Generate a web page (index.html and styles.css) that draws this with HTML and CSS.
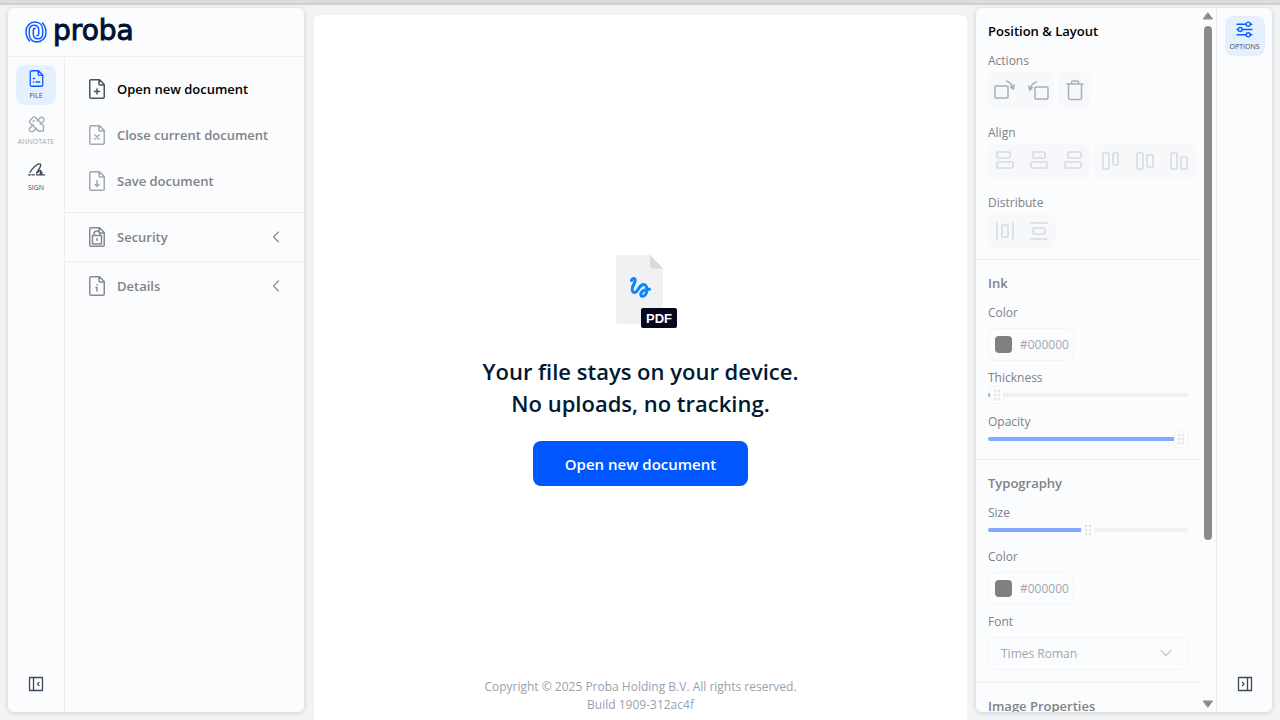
FILE: index.html
```html
<!DOCTYPE html>
<html lang="en">
<head>
<meta charset="utf-8">
<meta name="viewport" content="width=device-width, initial-scale=1">
<title>Proba</title>
<link rel="stylesheet" href="styles.css">
</head>
<body>
<svg class="defs" aria-hidden="true">
  <symbol id="doc" viewBox="0 0 16 20"><path d="M2 .75h8.500l4.750 4.750V18a1.250 1.250 0 0 1-1.250 1.250H2A1.250 1.250 0 0 1 .75 18V2A1.250 1.250 0 0 1 2 .75zM10 1v4a1 1 0 0 0 1 1h4"/></symbol>
  <symbol id="chev-left" viewBox="0 0 8 12"><path d="M6.500 1 1.500 6l5 5"/></symbol>
</svg>
<div class="topbar"></div>
<div class="app">
  <aside class="panel panel-left">
    <header class="brand">
      <svg class="brand-mark" viewBox="0 0 22 22" aria-hidden="true">
        <path id="whorl" d="M4.500 20C2 17 1 14 1 10.500 1 5 5 1 10 1c5 0 7.700 3.500 7.700 8v3.500c0 3.500-2 5.300-4.700 5.300-3 0-4.700-2-4.700-4.800V9.500c0-1.300.8-2.300 1.800-2.300"/>
        <use href="#whorl" transform="rotate(180 11 11)"/>
      </svg>
      <span class="brand-name">proba</span>
    </header>
    <div class="panel-body">
      <nav class="rail">
        <button class="rail-item active">
          <svg class="i16" viewBox="0 0 14 17"><path d="M2 .75h7l4.250 4.250v10a1.250 1.250 0 0 1-1.250 1.250H2A1.250 1.250 0 0 1 .75 15V2A1.250 1.250 0 0 1 2 .75zM8.700 1v3.300a1 1 0 0 0 1 1H13M3.800 8.500h1.200M3.800 12H4.200M6.500 12h3.700"/></svg>
          <span>FILE</span>
        </button>
        <button class="rail-item" disabled>
          <svg class="i16" viewBox="0 0 16 17"><path d="M1.300 4.700 4.700 1.300a1.500 1.500 0 0 1 2 0L15 9.800V15H9.900L1.300 6.700a1.500 1.500 0 0 1 0-2zM5.700 4.500 4.500 5.700M8.500 5l2.700-3a2.500 2.500 0 0 1 3.600 0 2.500 2.500 0 0 1 0 3.600L11.700 8.300M4.700 8.800 1.400 12a2.500 2.500 0 0 0 0 3 2.500 2.500 0 0 0 3.400.2L8 12.200"/></svg>
          <span>ANNOTATE</span>
        </button>
        <button class="rail-item">
          <svg class="i16" viewBox="0 0 16 17"><path d="M1.500 10.500C4 5.500 9 1.500 11.500 2c2.200.6-1.500 5.800-3.500 9.200 2-2 4.200-3.500 4.400-2.200.1.900-1.200 2.600-.4 3.200.7.400 1.500-.5 1.500-2M0 12.800h2M3.500 12.800h2.300M8 12.800h8"/></svg>
          <span>SIGN</span>
        </button>
        <button class="collapse" aria-label="Collapse left panel">
          <svg viewBox="0 0 16 16"><path d="M1.500 1.500h13v13h-13zM5.500 1.500v13M11 6.500 9.500 8l1.500 1.500"/></svg>
        </button>
      </nav>
      <div class="menu">
        <div class="menu-group">
          <button class="menu-item">
            <svg class="file-icon"><use href="#doc"/><path d="M8 10v5M5.500 12.500h5"/></svg>
            <span>Open new document</span>
          </button>
          <button class="menu-item" disabled>
            <svg class="file-icon"><use href="#doc"/><path d="m6 10 4 4M10 10l-4 4"/></svg>
            <span>Close current document</span>
          </button>
          <button class="menu-item" disabled>
            <svg class="file-icon"><use href="#doc"/><path d="M8 9.500v6M6 13.500l2 2 2-2"/></svg>
            <span>Save document</span>
          </button>
        </div>
        <button class="menu-item section" disabled>
          <svg class="file-icon"><use href="#doc"/><path d="M3.500 8.500h9v8.500h-9zM5 8.300V7a3 3 0 0 1 6 0v1.300M8 11.500v2"/></svg>
          <span>Security</span>
          <svg class="chev"><use href="#chev-left"/></svg>
        </button>
        <button class="menu-item section" disabled>
          <svg class="file-icon"><use href="#doc"/><path d="M7 11.500h1v3.500M8 8.800v.2"/></svg>
          <span>Details</span>
          <svg class="chev"><use href="#chev-left"/></svg>
        </button>
      </div>
    </div>
  </aside>

  <main class="stage">
    <section class="hero">
      <svg class="hero-icon" viewBox="0 0 61 73" role="img" aria-label="PDF">
        <path fill="#f0f1f3" d="M3 0h31l13 13v53a3 3 0 0 1-3 3H3a3 3 0 0 1-3-3V3a3 3 0 0 1 3-3z"/>
        <path fill="#d9d9d9" d="M34 0l13 13.500H37a3 3 0 0 1-3-3z"/>
        <path class="squiggle" d="M15.500 25.500C16 23.800 18 23 19 24.300c1.200 1.700-1.500 5-2.500 8-1 3.300.3 5.500 2.300 5.200 3.800-.5 4-8.200 9-8 2.700.2 3.400 3.500 3 6.500-.4 2.900-2.200 5.500-4.500 5.300-1.800-.2-2-2.300-1-3.800 1.500-2.300 5.500-3.500 8.200-3.200"/>
        <rect x="25" y="53" width="36" height="20" rx="2" fill="#05081d"/>
        <text x="43" y="68" class="pdf-tag">PDF</text>
      </svg>
      <h1>Your file stays on your device.<br>No uploads, no tracking.</h1>
      <button class="primary">Open new document</button>
    </section>
    <footer>Copyright © 2025 Proba Holding B.V. All rights reserved.<br>Build 1909-312ac4f</footer>
  </main>

  <aside class="panel panel-right">
    <div class="props">
      <section>
        <h2>Position &amp; Layout</h2>
        <span class="label first">Actions</span>
        <div class="tools actions">
          <div class="tool-group">
            <button disabled aria-label="Rotate right"><svg viewBox="0 0 22 20"><path d="M2 6h11a1 1 0 0 1 1 1v10a1 1 0 0 1-1 1H2a1 1 0 0 1-1-1V7a1 1 0 0 1 1-1zM12.500 1c3.500 1 5.800 3.500 6.500 8M16.500 6.500 19.300 9.300 20.200 5"/></svg></button>
            <button disabled aria-label="Rotate left"><svg viewBox="0 0 22 20"><path d="M9 7h11a1 1 0 0 1 1 1v10a1 1 0 0 1-1 1H9a1 1 0 0 1-1-1V8a1 1 0 0 1 1-1zM9.500 2C6 3 3.700 5.500 3 10M1.800 6 2.700 10.300 5.500 7.500"/></svg></button>
          </div>
          <div class="tool-group">
            <button disabled aria-label="Delete"><svg viewBox="0 0 22 22"><path d="M3 5h16M7.500 5V3.500A1.500 1.500 0 0 1 9 2h4a1.500 1.500 0 0 1 1.500 1.500V5M4.500 5v13.500A2 2 0 0 0 6.500 20.500h9a2 2 0 0 0 2-2V5"/></svg></button>
          </div>
        </div>
        <span class="label group">Align</span>
        <div class="tools faint">
          <div class="tool-group">
            <button disabled aria-label="Align left"><svg viewBox="0 0 20 20"><rect x="2" y="1" width="13" height="6" rx="1"/><rect x="2" y="11" width="16" height="6" rx="1"/></svg></button>
            <button disabled aria-label="Align center"><svg viewBox="0 0 20 20"><rect x="4" y="1" width="12" height="6" rx="1"/><rect x="2" y="11" width="16" height="6" rx="1"/></svg></button>
            <button disabled aria-label="Align right"><svg viewBox="0 0 20 20"><rect x="5" y="1" width="13" height="6" rx="1"/><rect x="2" y="11" width="16" height="6" rx="1"/></svg></button>
          </div>
          <div class="tool-group">
            <button disabled aria-label="Align top"><svg viewBox="0 0 20 20"><rect x="2" y="2" width="6" height="16" rx="1"/><rect x="12" y="2" width="5" height="12" rx="1"/></svg></button>
            <button disabled aria-label="Align middle"><svg viewBox="0 0 20 20"><rect x="2" y="2" width="6" height="16" rx="1"/><rect x="12" y="4" width="6" height="12" rx="1"/></svg></button>
            <button disabled aria-label="Align bottom"><svg viewBox="0 0 20 20"><rect x="2" y="2" width="6" height="16" rx="1"/><rect x="12" y="6" width="6" height="12" rx="1"/></svg></button>
          </div>
        </div>
        <span class="label group">Distribute</span>
        <div class="tools faint">
          <div class="tool-group">
            <button disabled aria-label="Distribute horizontally"><svg viewBox="0 0 20 20"><path d="M2 2v16M18 2v16"/><rect x="7" y="4" width="6" height="12" rx="1"/></svg></button>
            <button disabled aria-label="Distribute vertically"><svg viewBox="0 0 20 20"><path d="M2 2h16M2 18h16"/><rect x="4" y="7" width="12" height="6" rx="1"/></svg></button>
          </div>
        </div>
      </section>

      <section class="muted">
        <h2>Ink</h2>
        <label class="label first" for="ink-color">Color</label>
        <div class="color-field"><span class="swatch"></span><input id="ink-color" type="text" value="#000000" disabled></div>
        <label class="label after-field" for="thickness">Thickness</label>
        <input id="thickness" type="range" value="1" disabled style="--fill: 1%">
        <label class="label" for="opacity">Opacity</label>
        <input id="opacity" type="range" value="100" disabled style="--fill: 100%">
      </section>

      <section class="muted">
        <h2>Typography</h2>
        <label class="label first" for="size">Size</label>
        <input id="size" type="range" value="50" disabled style="--fill: 50%">
        <label class="label" for="type-color">Color</label>
        <div class="color-field"><span class="swatch"></span><input id="type-color" type="text" value="#000000" disabled></div>
        <label class="label after-field" for="font">Font</label>
        <div class="select-field">
          <select id="font" disabled><option>Times Roman</option></select>
          <svg viewBox="0 0 12 8" aria-hidden="true"><path d="m1 1.500 5 5 5-5"/></svg>
        </div>
      </section>

      <section class="muted">
        <h2>Image Properties</h2>
      </section>
    </div>
    <div class="scrollbar" aria-hidden="true">
      <svg viewBox="0 0 10 8"><path d="M5 1 9.500 7h-9z"/></svg>
      <div class="scroll-track"><div class="scroll-thumb"></div></div>
      <svg viewBox="0 0 10 8"><path d="M5 7 9.500 1h-9z"/></svg>
    </div>
    <nav class="rail">
      <button class="rail-item active">
        <svg class="i16" viewBox="0 0 16 16"><path d="M1 3H9.500M13.500 3h1.500M1 8H2M6 8h9M1 13H9.500M13.500 13h1.500"/><circle cx="11.500" cy="3" r="1.900"/><circle cx="4" cy="8" r="1.900"/><circle cx="11.500" cy="13" r="1.900"/></svg>
        <span>OPTIONS</span>
      </button>
      <button class="collapse" aria-label="Collapse right panel">
        <svg viewBox="0 0 16 16"><path d="M1.500 1.500h13v13h-13zM10.500 1.500v13M5.500 6.500 7 8l-1.500 1.500"/></svg>
      </button>
    </nav>
  </aside>
</div>
</body>
</html>
```
FILE: styles.css
```css
* { box-sizing: border-box; }

body {
  margin: 0;
  height: 100vh;
  display: flex;
  flex-direction: column;
  overflow: hidden;
  background: #f2f3f5;
  color: #000;
  font-family: "Open Sans", "Noto Sans", sans-serif;
  font-size: 12px;
}

button, input, select {
  margin: 0;
  padding: 0;
  border: 0;
  background: none;
  color: inherit;
  font: inherit;
}

svg {
  display: block;
  flex: none;
  fill: none;
  stroke: currentColor;
  stroke-width: 1.5;
  stroke-linecap: round;
  stroke-linejoin: round;
}

.defs { position: absolute; width: 0; height: 0; }

.topbar {
  flex: none;
  height: 5px;
  background: #dcdcdc;
  border-bottom: 2px solid #cfcfcf;
}

.app {
  flex: 1;
  min-height: 0;
  display: flex;
  padding: 0 8px;
}

/* Side panels */
.panel {
  flex: none;
  width: 296px;
  margin: 3px 0 8px;
  display: flex;
  overflow: hidden;
  background: #fbfcfe;
  border-radius: 6px;
  box-shadow: 0 1px 5px rgba(0, 0, 0, 0.16);
}

.panel-left { flex-direction: column; }

.brand {
  flex: none;
  height: 49px;
  display: flex;
  align-items: center;
  gap: 6px;
  padding-left: 17px;
  border-bottom: 1px solid #eceef0;
}

.brand-mark { width: 22px; height: 22px; color: #0b5cff; }

.brand-name {
  color: #001233;
  font-family: "DejaVu Sans", sans-serif;
  font-size: 28px;
  line-height: 34px;
  padding-bottom: 2px;
  -webkit-text-stroke: 1px #001233;
}

.panel-body { flex: 1; display: flex; min-height: 0; }

.rail {
  flex: none;
  width: 57px;
  display: flex;
  flex-direction: column;
  align-items: center;
  gap: 6px;
  padding: 8px 0 16px;
  border-right: 1px solid #eceef0;
}

.panel-right .rail { width: 56px; border-right: 0; border-left: 1px solid #eceef0; }

.rail-item {
  width: 40px;
  height: 40px;
  display: flex;
  flex-direction: column;
  align-items: center;
  justify-content: center;
  gap: 4px;
  border-radius: 8px;
  color: #3f4859;
  font-size: 7px;
  line-height: 10px;
  white-space: nowrap;
}

.rail-item:disabled { color: #a2a7b0; }
.rail-item.active { background: #e5f0ff; }
.rail-item.active svg { color: #0b5cff; }
.i16 { width: 17px; height: 17px; stroke-width: 1.3; }

.collapse { margin-top: auto; padding: 4px; color: #3f4859; }
.collapse svg { width: 16px; height: 16px; stroke-width: 1.3; }

/* File menu */
.menu { flex: 1; display: flex; flex-direction: column; }
.menu-group { padding: 9px 0 8px; }

.menu-item {
  width: 100%;
  height: 46px;
  display: flex;
  align-items: center;
  gap: 12px;
  padding: 0 24px;
  text-align: left;
  font-size: 13px;
  font-weight: 600;
}

.menu-item svg { color: #4a5263; }
.menu-item:disabled { color: #7f8388; }
.menu-item:disabled svg { color: #a2a7b0; }
.menu-item.section { height: 49px; border-top: 1px solid #eceef0; }
.menu-item.section svg { color: #868a90; }
.file-icon { width: 16px; height: 20px; }
.menu-item .chev { width: 8px; height: 12px; margin-left: auto; stroke-width: 1.2; }

/* Document area */
.stage {
  flex: 1;
  min-width: 0;
  margin: 10px 9px 0 10px;
  display: flex;
  flex-direction: column;
  background: #fff;
  border-radius: 6px 6px 0 0;
  text-align: center;
}

.hero {
  flex: 1;
  display: flex;
  flex-direction: column;
  align-items: center;
  justify-content: center;
  padding-top: 48px;
}

.hero-icon { width: 61px; height: 73px; margin-left: 12px; stroke: none; }

.hero-icon .squiggle { stroke: #0a84ff; stroke-width: 3; }

.pdf-tag {
  fill: #fff;
  font: bold 13px "Liberation Sans", sans-serif;
  text-anchor: middle;
}

h1 {
  margin: 27px 0 22px;
  color: #001a33;
  font-size: 22px;
  font-weight: 600;
  line-height: 32px;
}

.primary {
  height: 45px;
  padding: 0 32px;
  border-radius: 8px;
  background: #0057ff;
  color: #fff;
  font-size: 15px;
  font-weight: 600;
}

footer {
  padding-bottom: 6px;
  color: #99a1b0;
  line-height: 18px;
}

/* Property panel */
.props { flex: 1; min-width: 0; overflow: hidden; }

.props section {
  display: flex;
  flex-direction: column;
  align-items: flex-start;
  padding: 12px 12px 11px;
  border-bottom: 1px solid #eceef0;
}

.props section.muted { padding-bottom: 12px; }

h2 {
  margin: 0;
  font-size: 13px;
  font-weight: 600;
  line-height: 22px;
}

.muted h2 { color: #7f8388; }

.label {
  margin-top: 10px;
  color: #7f8184;
  line-height: 18px;
}

.label.group { margin-top: 16px; }
.label.after-field { margin-top: 8px; }

.tools { display: flex; gap: 4px; margin-top: 2px; color: #d6d9e0; }
.tools.actions { color: #a9aeb9; }
.tool-group { display: flex; border-radius: 8px; background: #f6f8fa; }

.tool-group button {
  width: 34px;
  height: 34px;
  display: flex;
  align-items: center;
  justify-content: center;
}

.actions .tool-group button { width: 33px; height: 36px; }
.tool-group svg { width: 20px; height: 20px; }
.actions .tool-group svg { width: 22px; height: 22px; }

.color-field {
  display: flex;
  align-items: center;
  gap: 8px;
  width: 86px;
  height: 33px;
  margin-top: 6px;
  padding: 0 2px 0 6px;
  border: 1px solid #f1f3f5;
  border-radius: 8px;
}

.color-field input { flex: 1; min-width: 0; color: #a2a7b0; }

.swatch {
  flex: none;
  width: 17px;
  height: 17px;
  border-radius: 4px;
  background: #7f807f;
}

input[type="range"] {
  width: 200px;
  height: 16px;
  appearance: none;
}

input[type="range"]::-webkit-slider-runnable-track {
  height: 4px;
  border-radius: 2px;
  background: linear-gradient(to right, #7faaff var(--fill), #eef0f2 var(--fill));
}

input[type="range"]::-webkit-slider-thumb {
  appearance: none;
  width: 14px;
  height: 18px;
  margin-top: -7px;
  padding: 2px;
  border: 1px solid #f1f3f5;
  border-radius: 4px;
  background:
    radial-gradient(circle, #e6e8eb 1px, transparent 2px) content-box 0 0 / 4px 4px,
    #fdfeff;
}

.select-field { position: relative; width: 200px; margin-top: 6px; }

.select-field select {
  width: 100%;
  height: 33px;
  padding: 0 12px;
  border: 1px solid #f1f3f5;
  border-radius: 8px;
  appearance: none;
  color: #a2a7b0;
  opacity: 1;
}

.select-field svg {
  position: absolute;
  right: 16px;
  top: 12px;
  width: 12px;
  height: 8px;
  color: #c3c7ce;
  stroke-width: 1.2;
}

.scrollbar {
  flex: none;
  width: 16px;
  display: flex;
  flex-direction: column;
  align-items: center;
  gap: 6px;
  padding: 4px 0;
}

.scrollbar svg { width: 10px; height: 8px; fill: #8b8b8b; stroke: #8b8b8b; stroke-width: 1; }
.scroll-track { flex: 1; }
.scroll-thumb { width: 8px; height: 77%; border-radius: 4px; background: #8b8b8b; }
```
